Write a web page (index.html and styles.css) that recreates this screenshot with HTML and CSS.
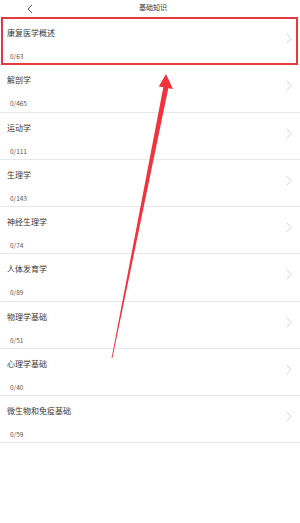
FILE: index.html
```html
<!DOCTYPE html>
<html lang="zh-CN">
<head>
<meta charset="utf-8">
<link rel="stylesheet" href="styles.css">
</head>
<body>
<div class="page">
  <header class="topbar">
    <svg class="back" width="8" height="10" viewBox="0 0 8 10"><polyline points="6,1 2,5 6,9" fill="none" stroke="#555" stroke-width="1"/></svg>
    <div class="title">基础知识</div>
  </header>
  <ul class="list">
    <li class="row"><div class="txt"><div class="name">康复医学概述</div><div class="count">0/63</div></div><svg class="chev" width="6" height="11" viewBox="0 0 6 11"><polyline points="1,1 5,5.5 1,10" fill="none" stroke="#d4d4d4" stroke-width="1"/></svg></li>
    <li class="row"><div class="txt"><div class="name">解剖学</div><div class="count">0/465</div></div><svg class="chev" width="6" height="11" viewBox="0 0 6 11"><polyline points="1,1 5,5.5 1,10" fill="none" stroke="#d4d4d4" stroke-width="1"/></svg></li>
    <li class="row"><div class="txt"><div class="name">运动学</div><div class="count">0/111</div></div><svg class="chev" width="6" height="11" viewBox="0 0 6 11"><polyline points="1,1 5,5.5 1,10" fill="none" stroke="#d4d4d4" stroke-width="1"/></svg></li>
    <li class="row"><div class="txt"><div class="name">生理学</div><div class="count">0/143</div></div><svg class="chev" width="6" height="11" viewBox="0 0 6 11"><polyline points="1,1 5,5.5 1,10" fill="none" stroke="#d4d4d4" stroke-width="1"/></svg></li>
    <li class="row"><div class="txt"><div class="name">神经生理学</div><div class="count">0/74</div></div><svg class="chev" width="6" height="11" viewBox="0 0 6 11"><polyline points="1,1 5,5.5 1,10" fill="none" stroke="#d4d4d4" stroke-width="1"/></svg></li>
    <li class="row"><div class="txt"><div class="name">人体发育学</div><div class="count">0/89</div></div><svg class="chev" width="6" height="11" viewBox="0 0 6 11"><polyline points="1,1 5,5.5 1,10" fill="none" stroke="#d4d4d4" stroke-width="1"/></svg></li>
    <li class="row"><div class="txt"><div class="name">物理学基础</div><div class="count">0/51</div></div><svg class="chev" width="6" height="11" viewBox="0 0 6 11"><polyline points="1,1 5,5.5 1,10" fill="none" stroke="#d4d4d4" stroke-width="1"/></svg></li>
    <li class="row"><div class="txt"><div class="name">心理学基础</div><div class="count">0/40</div></div><svg class="chev" width="6" height="11" viewBox="0 0 6 11"><polyline points="1,1 5,5.5 1,10" fill="none" stroke="#d4d4d4" stroke-width="1"/></svg></li>
    <li class="row"><div class="txt"><div class="name">微生物和免疫基础</div><div class="count">0/59</div></div><svg class="chev" width="6" height="11" viewBox="0 0 6 11"><polyline points="1,1 5,5.5 1,10" fill="none" stroke="#d4d4d4" stroke-width="1"/></svg></li>
  </ul>
  <div class="highlight"></div>
  <svg class="arrow" width="300" height="523" viewBox="0 0 300 523">
    <polygon fill="#f2323c" points="166,74 173,89 168.3,88.2 112.4,358 111.6,358 163.3,87.3 158.8,86.5"/>
  </svg>
</div>
</body>
</html>
```

FILE: styles.css
```css
* { box-sizing: border-box; }
html, body { margin: 0; padding: 0; background: #fff; }
body {
  font-family: "Noto Sans CJK SC", "Noto Sans", sans-serif;
  color: #333;
}
.page {
  position: relative;
  width: 300px;
  height: 523px;
  overflow: hidden;
}
.topbar {
  position: relative;
  height: 18px;
  display: flex;
  align-items: center;
  justify-content: center;
}
.back {
  position: absolute;
  left: 26px;
  top: 4px;
}
.title {
  font-size: 7px;
  line-height: 10px;
  color: #333;
  margin-left: 6px;
  margin-top: -4px;
}
.list {
  list-style: none;
  margin: 0;
  padding: 0;
}
.row {
  display: flex;
  height: 47.25px;
  border-bottom: 1px solid #e8e8e8;
  padding: 10px 8px 0 7px;
}
.txt {
  flex: 1;
  display: flex;
  flex-direction: column;
}
.name {
  font-size: 8px;
  line-height: 10px;
  color: #3a3a3a;
}
.count {
  font-size: 6.5px;
  line-height: 10px;
  color: #555;
  margin-top: 13px;
  padding-left: 3px;
}
.chev {
  margin-top: 5px;
}
.highlight {
  position: absolute;
  left: 1px;
  top: 17px;
  width: 297px;
  height: 48px;
  border: 2px solid #e23a40;
}
.arrow {
  position: absolute;
  left: 0;
  top: 0;
}
```
